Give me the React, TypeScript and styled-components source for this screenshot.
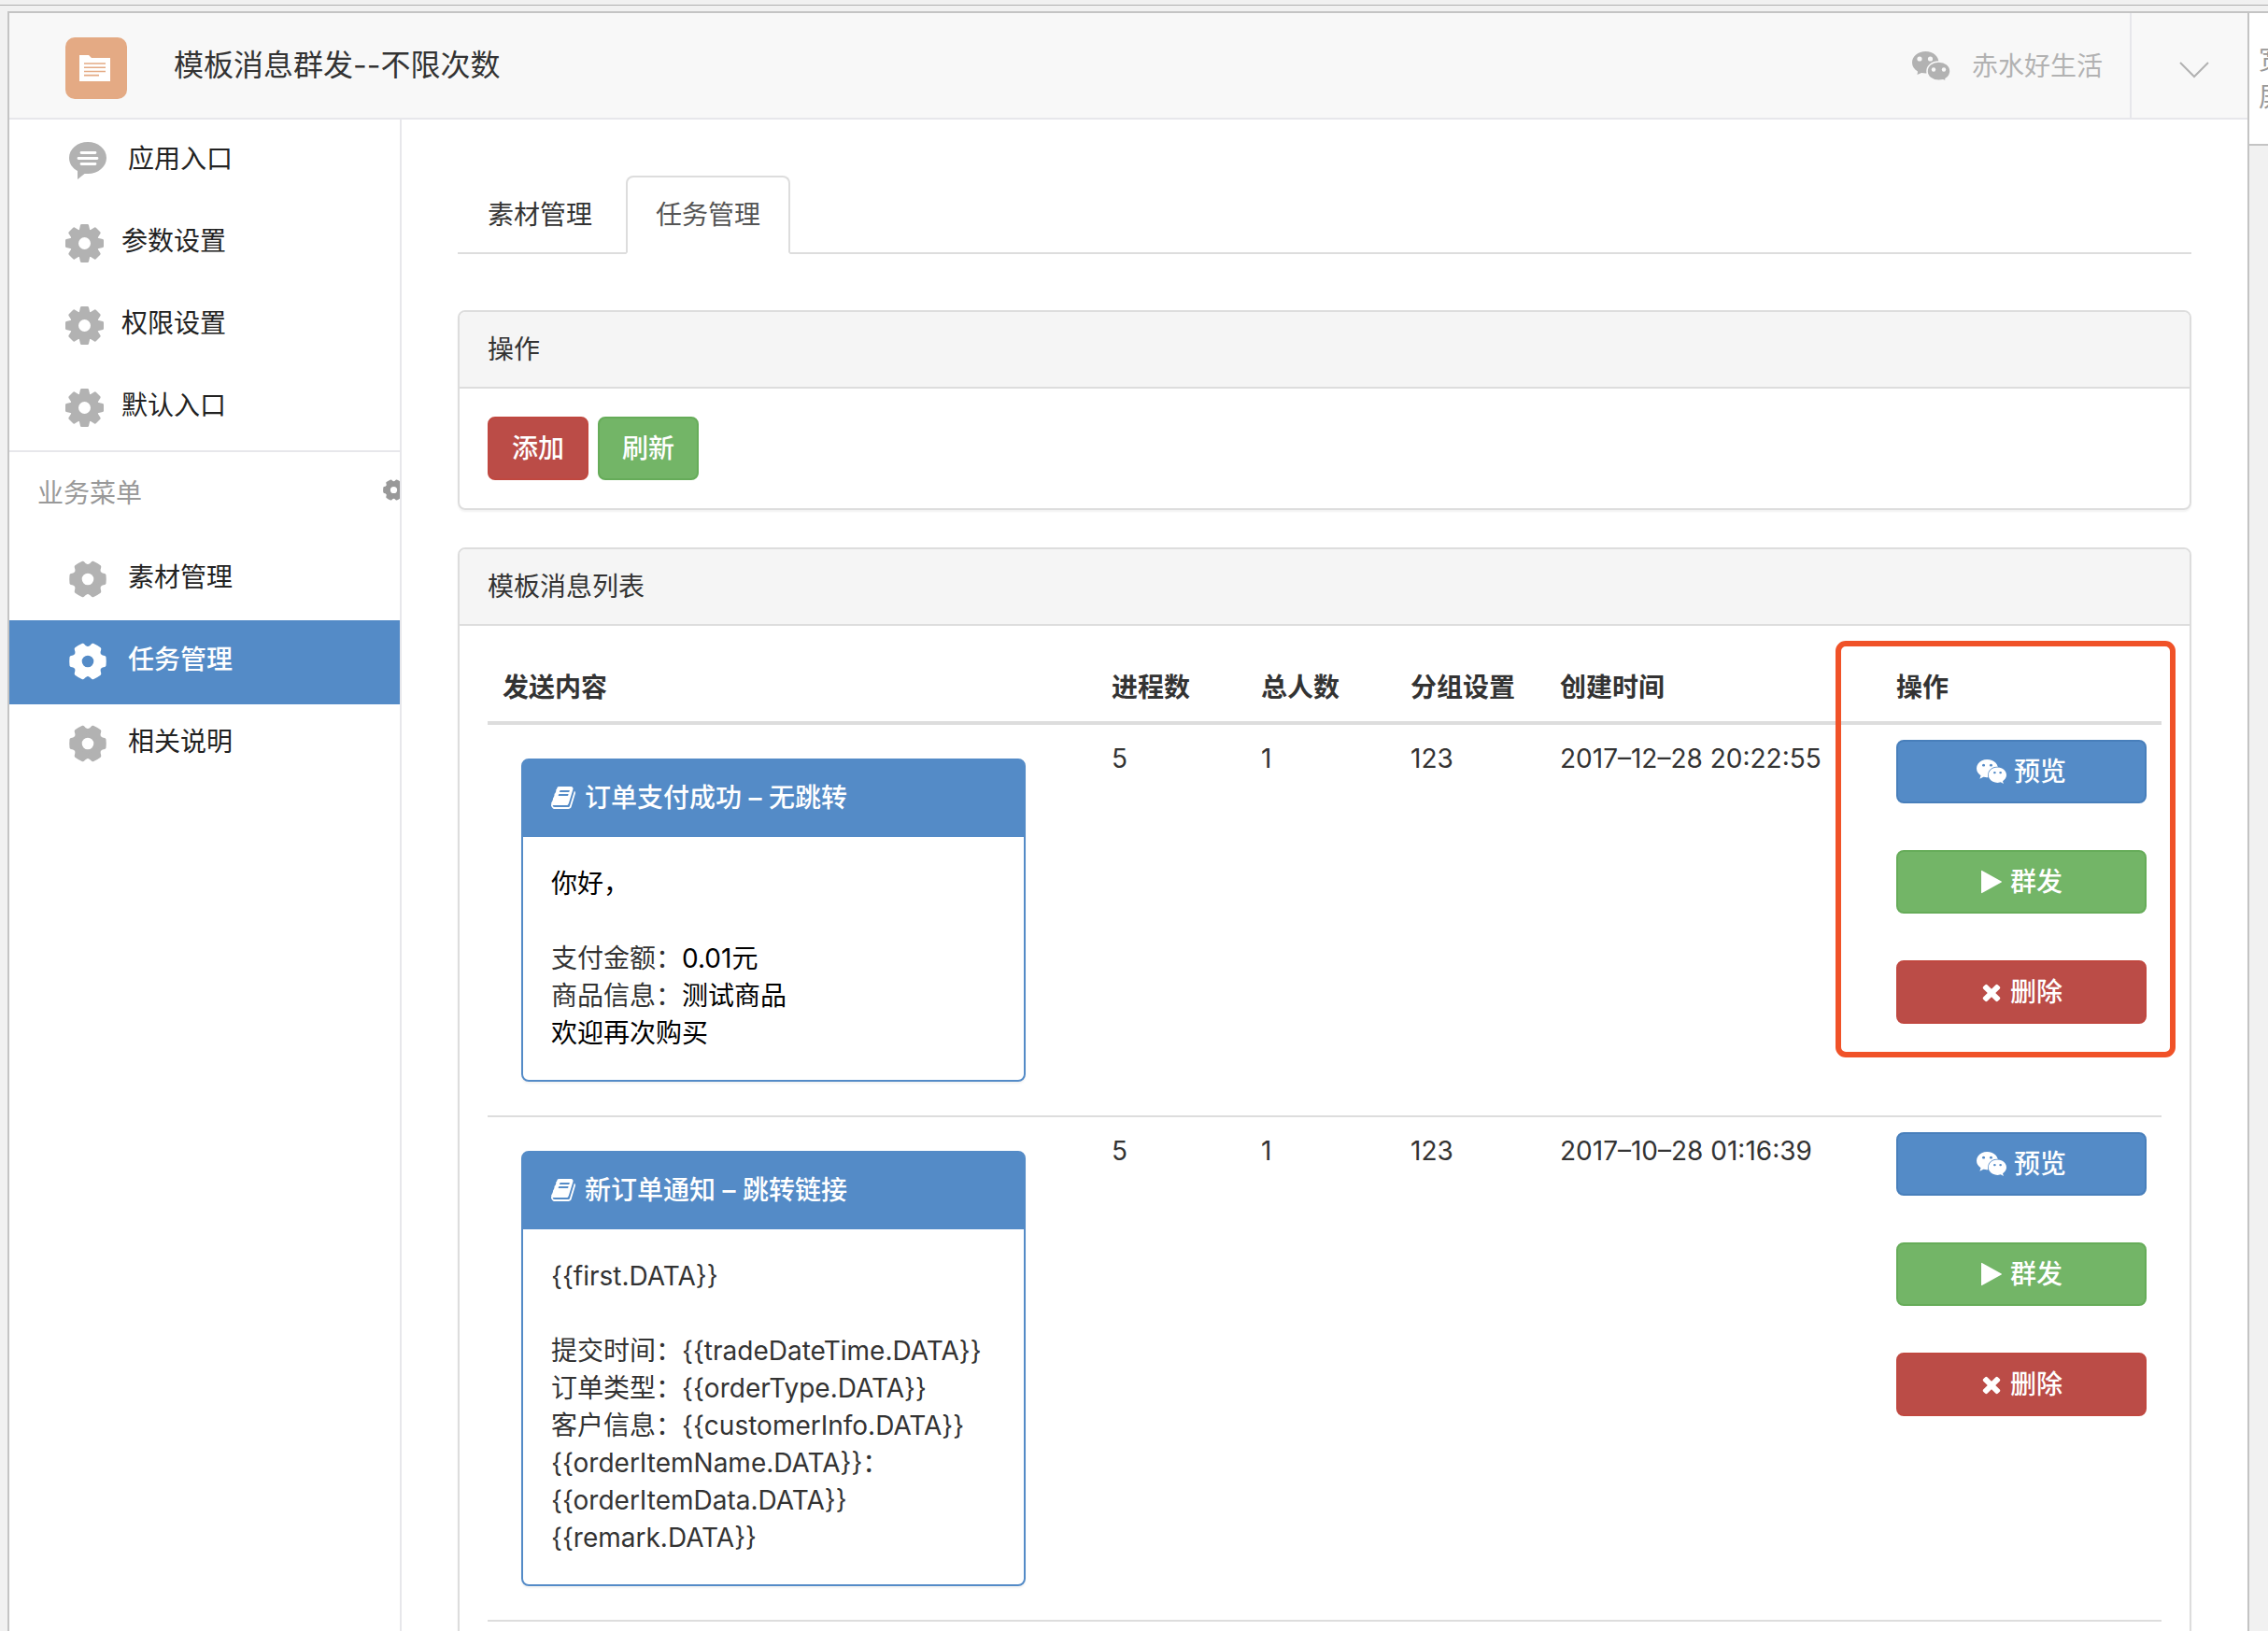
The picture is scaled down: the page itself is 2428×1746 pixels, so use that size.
import React from "react";
import styled, { createGlobalStyle, css } from "styled-components";

const color = {
  text: "#333333",
  primary: "#548bc7",
  line: "#dddddd",
  softLine: "#e7e7eb",
  frame: "#c4c4c4",
  icon: "#b2b2b2",
};

const GlobalStyle = createGlobalStyle`
  *, *::before, *::after { box-sizing: border-box; }
  body {
    margin: 0;
    background: #f1f1f1;
    color: ${color.text};
    font-family: Inter, "Noto Sans CJK SC", sans-serif;
    font-size: 28px;
    line-height: 40px;
  }
  button { font: inherit; cursor: pointer; }
  a { color: inherit; text-decoration: none; }
  svg { display: block; flex: none; }
`;

/* ---------- page frame ---------- */

const Page = styled.div`
  display: flex;
  flex-direction: column;
  height: 100vh;
  overflow: hidden;
`;

const TopStrip = styled.div`
  flex: none;
  height: 6px;
  margin-bottom: 6px;
  border-bottom: 1px solid #b0b0b0;
`;

const Stage = styled.div`
  flex: 1;
  min-height: 0;
  display: flex;
  padding-left: 8px;
`;

const Frame = styled.div`
  flex: 1;
  min-width: 0;
  display: flex;
  flex-direction: column;
  border: 2px solid ${color.frame};
  border-bottom: 0;
  background: #ffffff;
`;

const SideDock = styled.aside`
  flex: none;
  width: 20px;
  overflow: hidden;
`;

const WideToggle = styled.button`
  display: block;
  width: 54px;
  height: 144px;
  padding: 0 16px 0 10px;
  border: 2px solid ${color.frame};
  border-left: 0;
  background: #ffffff;
  color: #999999;
`;

/* ---------- header ---------- */

const Header = styled.header`
  flex: none;
  display: flex;
  align-items: stretch;
  height: 114px;
  padding-left: 60px;
  border-bottom: 2px solid ${color.softLine};
  background: #f8f8f8;
`;

const Brand = styled.div`
  flex: 1;
  display: flex;
  align-items: center;
  gap: 50px;
  padding-top: 6px;
`;

const Title = styled.h1`
  margin: 0;
  padding-bottom: 6px;
  font-size: 32px;
  font-weight: 400;
`;

const Account = styled.div`
  display: flex;
  align-items: center;
  gap: 23px;
  padding: 2px 29px 0 0;
  color: ${color.icon};
`;

const HeaderMenu = styled.button`
  display: flex;
  align-items: center;
  justify-content: center;
  width: 126px;
  padding: 10px 0 0 10px;
  border: 0;
  border-left: 2px solid ${color.softLine};
  background: none;
  color: ${color.icon};
`;

/* ---------- sidebar ---------- */

const Body = styled.div`
  flex: 1;
  min-height: 0;
  display: flex;
`;

const Sidebar = styled.nav`
  flex: none;
  width: 420px;
  border-right: 2px solid ${color.softLine};
  overflow: hidden;
`;

const MenuGroup = styled.ul`
  margin: 0;
  padding: 0;
  list-style: none;
`;

const MenuLink = styled.a<{ $active?: boolean; $inset: number; $gap: number }>`
  display: flex;
  align-items: center;
  gap: ${(p) => p.$gap}px;
  height: 88px;
  padding: 0 0 4px ${(p) => p.$inset}px;
  color: #222222;

  svg {
    margin-top: 4px;
    color: ${color.icon};
  }

  ${(p) =>
    p.$active &&
    css`
      background: ${color.primary};
      box-shadow: 0 2px 0 ${color.primary};
      color: #ffffff;
      font-weight: 500;
      svg { color: #ffffff; }
    `}
`;

const MenuHeading = styled.div`
  display: flex;
  align-items: center;
  justify-content: space-between;
  height: 96px;
  margin-top: 2px;
  margin-bottom: -2px;
  padding: 0 0 6px 30px;
  border-top: 2px solid ${color.softLine};
  color: #999999;
`;

const HeadingGear = styled.span`
  width: 18px;
  padding-bottom: 8px;
  overflow: hidden;
`;

/* ---------- main column ---------- */

const Main = styled.main`
  flex: 1;
  min-width: 0;
  padding: 60px 60px 40px;
  overflow-y: auto;
  scrollbar-width: none;
`;

const Tabs = styled.div`
  display: flex;
  gap: 4px;
  margin-bottom: 60px;
  border-bottom: 2px solid ${color.line};
`;

const Tab = styled.a<{ $active?: boolean }>`
  margin-bottom: -2px;
  padding: 20px 30px;
  border: 2px solid transparent;
  border-radius: 8px 8px 0 0;
  ${(p) =>
    p.$active &&
    css`
      border-color: ${color.line} ${color.line} #ffffff;
      background: #ffffff;
      color: #555555;
    `}
`;

const Panel = styled.section`
  margin-bottom: 40px;
  border: 2px solid ${color.line};
  border-radius: 8px;
  box-shadow: 0 2px 2px rgba(0, 0, 0, 0.05);
`;

const PanelHead = styled.h2`
  margin: 0;
  padding: 20px 30px;
  border-bottom: 2px solid ${color.line};
  border-radius: 6px 6px 0 0;
  background: #f5f5f5;
  font-size: 28px;
  font-weight: 400;
`;

const PanelBody = styled.div`
  padding: 30px;
`;

const ButtonRow = styled.div`
  display: flex;
  gap: 10px;
`;

const tones = {
  primary: { fill: color.primary, edge: "#487fbb" },
  success: { fill: "#73b567", edge: "#66ac59" },
  danger: { fill: "#bb4c47", edge: "#c04840" },
};

type Tone = keyof typeof tones;

const Button = styled.button<{ $tone: Tone }>`
  display: flex;
  align-items: center;
  justify-content: center;
  gap: 8px;
  padding: 12px 24px;
  border: 2px solid ${(p) => tones[p.$tone].edge};
  border-radius: 8px;
  background: ${(p) => tones[p.$tone].fill};
  color: #ffffff;
  font-weight: 500;
`;

/* ---------- message table ---------- */

const TableWrap = styled.div`
  position: relative;
`;

const Highlight = styled.div`
  position: absolute;
  top: -14px;
  right: -15px;
  width: 364px;
  height: 446px;
  border: 6px solid #f05228;
  border-radius: 11px;
  pointer-events: none;
`;

const Table = styled.table`
  width: 100%;
  table-layout: fixed;
  border-spacing: 0;

  th {
    padding: 16px;
    border-bottom: 4px solid ${color.line};
    text-align: left;
    font-weight: 700;
  }
  td {
    padding: 16px;
    border-bottom: 2px solid ${color.line};
    vertical-align: top;
    white-space: nowrap;
  }
`;

const Col = styled.col<{ $width?: number }>`
  width: ${(p) => (p.$width ? `${p.$width}px` : "auto")};
`;

const Card = styled.article`
  max-width: 540px;
  margin: 20px;
  border: 2px solid ${color.primary};
  border-radius: 8px;
  box-shadow: 0 2px 2px rgba(0, 0, 0, 0.05);
`;

const CardHead = styled.h3`
  display: flex;
  align-items: center;
  gap: 8px;
  margin: 0;
  padding: 20px 30px 22px;
  border-radius: 4px 4px 0 0;
  background: ${color.primary};
  color: #ffffff;
  font-size: 28px;
  font-weight: 500;
`;

const CardBody = styled.div`
  padding: 30px;
`;

const Line = styled.p`
  min-height: 40px;
  margin: 0;
`;

const Value = styled.span`
  color: #000000;
`;

const Actions = styled.div`
  display: flex;
  flex-direction: column;
  gap: 50px;
`;

/* ---------- icons ---------- */

const LogoIcon = () => (
  <svg width="66" height="66" viewBox="0 0 66 66" aria-hidden="true">
    <rect width="66" height="66" rx="10" fill="#e4aa84" />
    <path d="M15 19h10l3 3h20v25H15z" fill="#ffffff" />
    <path d="M20 28h23M20 32.200h23M20 36.500h23M20 40.600h16" stroke="#e4aa84" strokeWidth="1.600" />
  </svg>
);

const ChatIcon = () => (
  <svg width="40" height="40" viewBox="0 0 40 40" aria-hidden="true">
    <path
      d="M20 0C31 0 40 7.500 40 17S31 34 20 34h-3.500L9 40V31C3.500 28 0 23 0 17 0 7.500 9 0 20 0z"
      fill="currentColor"
    />
    <path d="M13 11.500h15M10 17.500h20M13 23.500h15" stroke="#ffffff" strokeWidth="2.800" strokeLinecap="round" />
  </svg>
);

const CogIcon = () => (
  <svg width="41" height="41" viewBox="-20.500 -20.500 41 41" fill="currentColor" aria-hidden="true">
    <circle r="11" fill="none" stroke="currentColor" strokeWidth="9" />
    {[0, 45, 90, 135, 180, 225, 270, 315].map((a) => (
      <path key={a} transform={`rotate(${a})`} d="M-6-13L-4.500-19.500Q-4.200-20.500-3.200-20.500H3.200Q4.200-20.500 4.500-19.500L6-13z" />
    ))}
  </svg>
);

const GearIcon = ({ size = 40 }: { size?: number }) => (
  <svg width={size} height={size} viewBox="-20 -20 40 40" fill="currentColor" aria-hidden="true">
    <circle r="11" fill="none" stroke="currentColor" strokeWidth="9.400" />
    {[0, 60, 120, 180, 240, 300].map((a) => (
      <path key={a} transform={`rotate(${a})`} d="M10-8L14-7.800Q15.500-6.300 18-6Q19.200-5.800 19.500-4.500Q20 0 19.500 4.500Q19.200 5.800 18 6Q15.500 6.300 14 7.800L10 8z" />
    ))}
  </svg>
);

const AccountIcon = () => (
  <svg width="41" height="32" viewBox="0 0 41 32" aria-hidden="true">
    <path d="M14.500 0C22.500 0 28.500 5 28.500 12S22.500 23.500 14.500 23.500L10 23 5.500 25 6 21.500C2 19 0 16 0 12 0 5 6.500 0 14.500 0z" fill="currentColor" />
    <circle cx="8" cy="8" r="2.600" fill="#f8f8f8" />
    <circle cx="19.500" cy="8" r="2.600" fill="#f8f8f8" />
    <path
      d="M28.500 11C35.800 11 41 15.500 41 21.300 41 25 39 27.600 36 29.500L36.500 32 33 30.800 28.500 31.400C21.200 31.400 16 27 16 21.300S21.200 11 28.500 11z"
      fill="currentColor"
      stroke="#f8f8f8"
      strokeWidth="1.600"
    />
    <circle cx="23" cy="19.500" r="2.200" fill="#f8f8f8" />
    <circle cx="34" cy="19.500" r="2.200" fill="#f8f8f8" />
  </svg>
);

const ChevronIcon = () => (
  <svg width="32" height="18" viewBox="0 0 32 18" fill="none" stroke="currentColor" strokeWidth="2" aria-hidden="true">
    <path d="M1 1l15 15L31 1" />
  </svg>
);

const BookIcon = () => (
  <svg width="28" height="28" viewBox="0 0 1792 1792" fill="currentColor" aria-hidden="true">
    <path d="M1639 478q40 57 18 129l-275 906q-19 64-76.500 107.500t-122.500 43.500h-923q-77 0-148.500-53.500t-99.500-131.500q-24-67-2-127 0-4 3-27t4-37q1-8-3-21.500t-3-19.500q2-11 8-21t16.500-23.500 16.500-23.500q23-38 45-91.500t30-91.500q3-10 .5-30t-.5-28q3-11 17-28t17-23q21-36 42-92t25-90q1-9-2.500-32t.5-28q4-13 22-30.500t22-22.500q19-26 42.500-84.500t27.500-96.500q1-8-3-25.500t-2-26.500q2-8 9-18t18-23 17-21q8-12 16.500-30.500t15-35 16-36 19.500-32 26.500-23.500 36-11.500 47.500 5.500l-1 3q38-9 51-9h761q74 0 114 56t18 130l-274 906q-36 119-71.500 153.500t-128.500 34.500h-869q-27 0-38 15-11 16-1 43 24 70 144 70h923q29 0 56-15.500t35-41.500l300-987q7-22 5-57 38 15 59 43zm-1064 2q-4 13 2 22.500t20 9.500h608q13 0 25.500-9.500t16.500-22.500l21-64q4-13-2-22.500t-20-9.500h-608q-13 0-25.500 9.500t-16.500 22.500zm-83 256q-4 13 2 22.500t20 9.500h608q13 0 25.500-9.500t16.500-22.500l21-64q4-13-2-22.500t-20-9.500h-608q-13 0-25.500 9.500t-16.500 22.500z" />
  </svg>
);

const WechatIcon = () => (
  <svg width="32" height="28" viewBox="0 0 2048 1792" fill="currentColor" aria-hidden="true">
    <path d="M580 461q0-41-25-66t-66-25q-43 0-76 25.500t-33 65.500q0 39 33 64.500t76 25.500q41 0 66-24.500t25-65.500zm743 507q0-28-25.500-50t-65.500-22q-27 0-49.500 22.500t-22.500 49.500q0 28 22.500 50.500t49.500 22.500q40 0 65.500-22t25.500-51zm-236-507q0-41-24.500-66t-65.500-25q-43 0-76 25.500t-33 65.500q0 39 33 64.500t76 25.500q41 0 65.500-24.500t24.500-65.500zm635 507q0-28-26-50t-65-22q-27 0-49.500 22.500t-22.500 49.500q0 28 22.500 50.500t49.500 22.500q39 0 65-22t26-51zm-266-397q-31-4-70-4-169 0-311 77t-223.500 208.500-81.500 287.500q0 78 23 152-35 3-68 3-26 0-50-1.500t-55-6.500-44.500-7-54.500-10.500-50-10.500l-253 127 72-218q-290-203-290-490 0-169 97.500-311t264-223.500 363.500-81.500q176 0 332.500 66t262 182.500 136.500 260.500zm592 561q0 117-68.500 223.500t-185.500 193.500l55 181-199-109q-150 37-218 37-169 0-311-70.500t-223.500-191.500-81.500-264 81.500-264 223.500-191.500 311-70.500q161 0 303 70.500t227.500 192 85.500 263.500z" />
  </svg>
);

const PlayIcon = () => (
  <svg width="24" height="28" viewBox="128 0 1536 1792" fill="currentColor" aria-hidden="true">
    <path d="M1576 927l-1328 738q-23 13-39.500 3t-16.500-36v-1472q0-26 16.500-36t39.500 3l1328 738q23 13 23 31t-23 31z" />
  </svg>
);

const CloseIcon = () => (
  <svg width="24" height="28" viewBox="128 0 1536 1792" fill="currentColor" aria-hidden="true">
    <path d="M1490 1322q0 40-28 68l-136 136q-28 28-68 28t-68-28l-294-294-294 294q-28 28-68 28t-68-28l-136-136q-28-28-28-68t28-68l294-294-294-294q-28-28-28-68t28-68l136-136q28-28 68-28t68 28l294 294 294-294q28-28 68-28t68 28l136 136q28 28 28 68t-28 68l-294 294 294 294q28 28 28 68z" />
  </svg>
);

/* ---------- data ---------- */

type BodyLine = { label?: string; value?: string };

const messages: {
  title: string;
  lines: BodyLine[];
  processes: number;
  people: number;
  group: string;
  created: string;
}[] = [
  {
    title: "订单支付成功 – 无跳转",
    lines: [
      { value: "你好，" },
      {},
      { label: "支付金额：", value: "0.01元" },
      { label: "商品信息：", value: "测试商品" },
      { value: "欢迎再次购买" },
    ],
    processes: 5,
    people: 1,
    group: "123",
    created: "2017–12–28 20:22:55",
  },
  {
    title: "新订单通知 – 跳转链接",
    lines: [
      { label: "{{first.DATA}}" },
      {},
      { label: "提交时间：{{tradeDateTime.DATA}}" },
      { label: "订单类型：{{orderType.DATA}}" },
      { label: "客户信息：{{customerInfo.DATA}}" },
      { label: "{{orderItemName.DATA}}：" },
      { label: "{{orderItemData.DATA}}" },
      { label: "{{remark.DATA}}" },
    ],
    processes: 5,
    people: 1,
    group: "123",
    created: "2017–10–28 01:16:39",
  },
];

export default function App() {
  return (
    <>
      <GlobalStyle />
      <Page>
        <TopStrip />
        <Stage>
          <Frame>
            <Header>
              <Brand>
                <LogoIcon />
                <Title>模板消息群发--不限次数</Title>
              </Brand>
              <Account>
                <AccountIcon />
                <span>赤水好生活</span>
              </Account>
              <HeaderMenu aria-label="展开菜单">
                <ChevronIcon />
              </HeaderMenu>
            </Header>
            <Body>
              <Sidebar>
                <MenuGroup>
                  <li>
                    <MenuLink href="#entry" $inset={64} $gap={23}>
                      <ChatIcon />
                      应用入口
                    </MenuLink>
                  </li>
                  {["参数设置", "权限设置", "默认入口"].map((name) => (
                    <li key={name}>
                      <MenuLink href={`#${name}`} $inset={60} $gap={19}>
                        <CogIcon />
                        {name}
                      </MenuLink>
                    </li>
                  ))}
                </MenuGroup>
                <MenuHeading>
                  业务菜单
                  <HeadingGear>
                    <GearIcon size={23} />
                  </HeadingGear>
                </MenuHeading>
                <MenuGroup>
                  {["素材管理", "任务管理", "相关说明"].map((name) => (
                    <li key={name}>
                      <MenuLink href={`#${name}`} $inset={64} $gap={23} $active={name === "任务管理"}>
                        <GearIcon />
                        {name}
                      </MenuLink>
                    </li>
                  ))}
                </MenuGroup>
              </Sidebar>
              <Main>
                <Tabs>
                  <Tab href="#material">素材管理</Tab>
                  <Tab href="#task" $active>
                    任务管理
                  </Tab>
                </Tabs>
                <Panel>
                  <PanelHead>操作</PanelHead>
                  <PanelBody>
                    <ButtonRow>
                      <Button $tone="danger">添加</Button>
                      <Button $tone="success">刷新</Button>
                    </ButtonRow>
                  </PanelBody>
                </Panel>
                <Panel>
                  <PanelHead>模板消息列表</PanelHead>
                  <PanelBody>
                    <TableWrap>
                      <Table>
                        <colgroup>
                          <Col />
                          <Col $width={160} />
                          <Col $width={160} />
                          <Col $width={160} />
                          <Col $width={360} />
                          <Col $width={300} />
                        </colgroup>
                        <thead>
                          <tr>
                            <th>发送内容</th>
                            <th>进程数</th>
                            <th>总人数</th>
                            <th>分组设置</th>
                            <th>创建时间</th>
                            <th>操作</th>
                          </tr>
                        </thead>
                        <tbody>
                          {messages.map((m) => (
                            <tr key={m.title}>
                              <td>
                                <Card>
                                  <CardHead>
                                    <BookIcon />
                                    {m.title}
                                  </CardHead>
                                  <CardBody>
                                    {m.lines.map((line, i) => (
                                      <Line key={i}>
                                        {line.label}
                                        {line.value && <Value>{line.value}</Value>}
                                      </Line>
                                    ))}
                                  </CardBody>
                                </Card>
                              </td>
                              <td>{m.processes}</td>
                              <td>{m.people}</td>
                              <td>{m.group}</td>
                              <td>{m.created}</td>
                              <td>
                                <Actions>
                                  <Button $tone="primary">
                                    <WechatIcon />
                                    预览
                                  </Button>
                                  <Button $tone="success">
                                    <PlayIcon />
                                    群发
                                  </Button>
                                  <Button $tone="danger">
                                    <CloseIcon />
                                    删除
                                  </Button>
                                </Actions>
                              </td>
                            </tr>
                          ))}
                        </tbody>
                      </Table>
                      <Highlight />
                    </TableWrap>
                  </PanelBody>
                </Panel>
              </Main>
            </Body>
          </Frame>
          <SideDock>
            <WideToggle>宽屏</WideToggle>
          </SideDock>
        </Stage>
      </Page>
    </>
  );
}
